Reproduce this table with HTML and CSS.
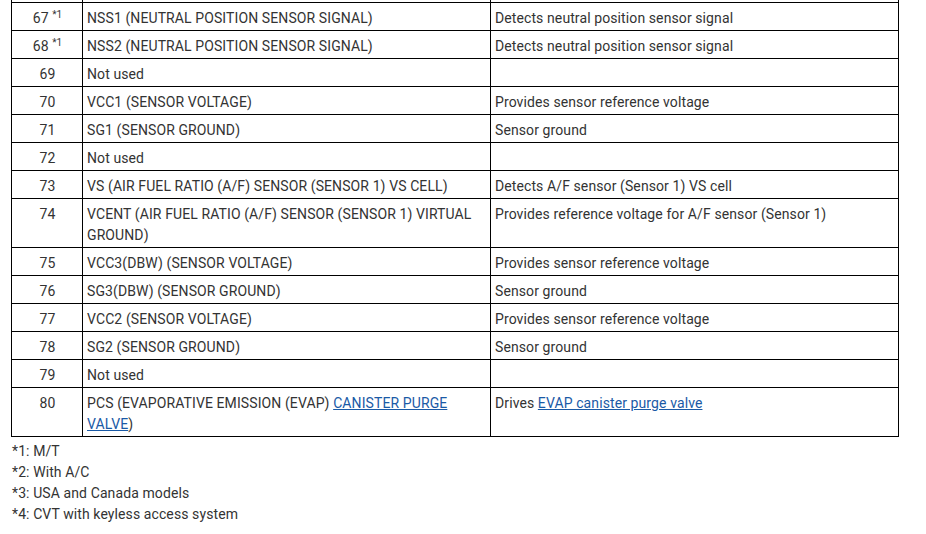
FILE: index.html
```html
<!DOCTYPE html>
<html>
<head>
<meta charset="utf-8">
<link rel="stylesheet" href="styles.css">
</head>
<body>
<div class="page">
<table class="pins">
<colgroup><col class="c1"><col class="c2"><col class="c3"></colgroup>
<tr class="cut"><td></td><td></td><td></td></tr>
<tr><td class="num">67 <sup>*1</sup></td><td>NSS1 (NEUTRAL POSITION SENSOR SIGNAL)</td><td>Detects neutral position sensor signal</td></tr>
<tr><td class="num">68 <sup>*1</sup></td><td>NSS2 (NEUTRAL POSITION SENSOR SIGNAL)</td><td>Detects neutral position sensor signal</td></tr>
<tr><td class="num">69</td><td>Not used</td><td></td></tr>
<tr><td class="num">70</td><td>VCC1 (SENSOR VOLTAGE)</td><td>Provides sensor reference voltage</td></tr>
<tr><td class="num">71</td><td>SG1 (SENSOR GROUND)</td><td>Sensor ground</td></tr>
<tr><td class="num">72</td><td>Not used</td><td></td></tr>
<tr><td class="num">73</td><td>VS (AIR FUEL RATIO (A/F) SENSOR (SENSOR 1) VS CELL)</td><td>Detects A/F sensor (Sensor 1) VS cell</td></tr>
<tr><td class="num">74</td><td>VCENT (AIR FUEL RATIO (A/F) SENSOR (SENSOR 1) VIRTUAL GROUND)</td><td>Provides reference voltage for A/F sensor (Sensor 1)</td></tr>
<tr><td class="num">75</td><td>VCC3(DBW) (SENSOR VOLTAGE)</td><td>Provides sensor reference voltage</td></tr>
<tr><td class="num">76</td><td>SG3(DBW) (SENSOR GROUND)</td><td>Sensor ground</td></tr>
<tr><td class="num">77</td><td>VCC2 (SENSOR VOLTAGE)</td><td>Provides sensor reference voltage</td></tr>
<tr><td class="num">78</td><td>SG2 (SENSOR GROUND)</td><td>Sensor ground</td></tr>
<tr><td class="num">79</td><td>Not used</td><td></td></tr>
<tr><td class="num">80</td><td>PCS (EVAPORATIVE EMISSION (EVAP) <a href="#">CANISTER PURGE VALVE</a>)</td><td>Drives <a href="#">EVAP canister purge valve</a></td></tr>
</table>
<div class="notes">
<p>*1: M/T</p>
<p>*2: With A/C</p>
<p>*3: USA and Canada models</p>
<p>*4: CVT with keyless access system</p>
</div>
</div>
</body>
</html>
```
FILE: styles.css
```css
html, body {
  margin: 0;
  padding: 0;
  background: #fff;
}
body {
  font-family: Roboto, "Liberation Sans", sans-serif;
  font-size: 14px;
  line-height: 21px;
  letter-spacing: 0.1px;
  color: #333;
}
.page {
  padding-left: 11px;
}
.pins {
  border-collapse: collapse;
  table-layout: fixed;
  width: 887px;
}
.c1 { width: 71px; }
.c2 { width: 408px; }
.c3 { width: 408px; }
.pins td {
  border: 1px solid #000;
  padding: 5px 3px 1px 4px;
  vertical-align: top;
  text-align: left;
}
.pins tr.cut td {
  border-top: none;
  height: 2px;
  padding: 0;
}
.pins td.num {
  text-align: center;
}
.pins sup {
  font-size: 10px;
  line-height: 0;
  vertical-align: 5px;
}
.pins a {
  color: #1a5aa6;
  text-decoration: underline;
}
.notes {
  padding-top: 4px;
}
.notes p {
  margin: 0;
  padding-left: 1px;
}
```
